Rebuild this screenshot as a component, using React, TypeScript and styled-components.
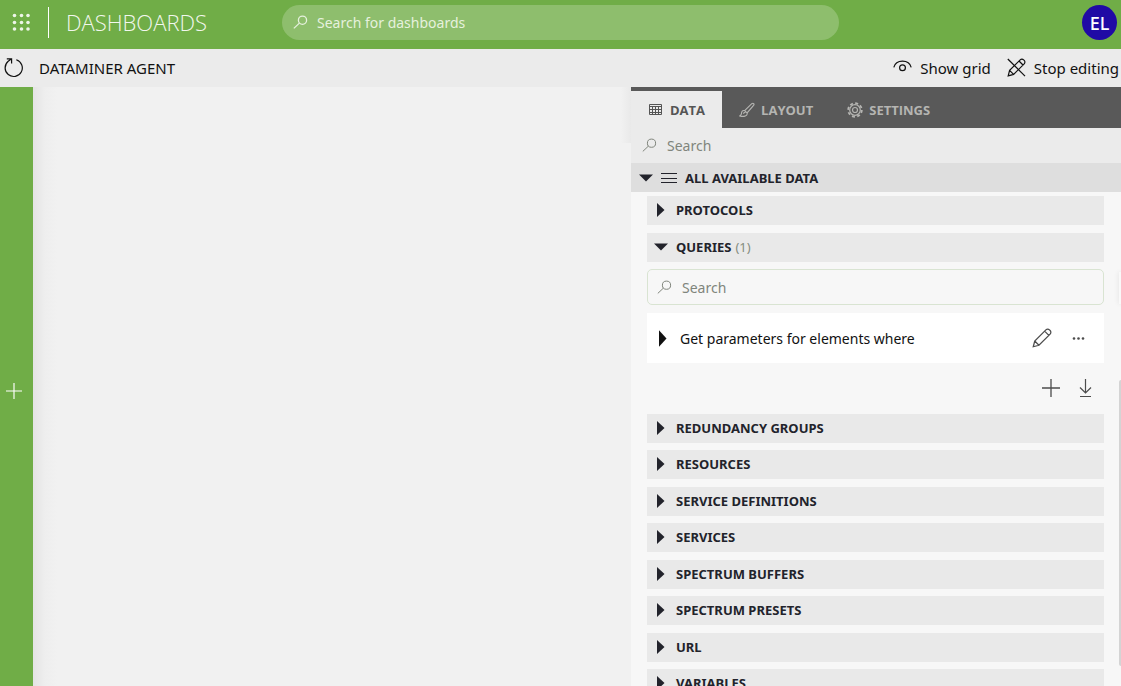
import React from "react";
import styled, { createGlobalStyle, css } from "styled-components";

const GlobalStyle = createGlobalStyle`
  *, *::before, *::after { box-sizing: border-box; }
  html, body { margin: 0; height: 100%; }
  #root { height: 100%; }
  body {
    overflow: hidden;
    font-family: "Noto Sans", "Open Sans", sans-serif;
    font-size: 14px;
    color: #111;
  }
  button, input { font: inherit; color: inherit; }
  button { border: 0; background: none; padding: 0; cursor: pointer; }
  svg { display: block; flex: none; }
`;

const Page = styled.div`
  display: flex;
  flex-direction: column;
  height: 100%;
  background: #f1f1f1;
`;

const Header = styled.header`
  flex: none;
  display: grid;
  grid-template-columns: 1fr minmax(0, 557px) 1fr;
  align-items: center;
  height: 49px;
  padding: 0 4px 4px;
  background: #70ad47;
`;

const Brand = styled.div`
  display: flex;
  align-items: center;
  padding-left: 8px;
`;

const AppTitle = styled.h1`
  margin: 0 0 0 16px;
  padding-left: 17px;
  border-left: 1px solid #fff;
  font-family: "Open Sans", "Noto Sans", sans-serif;
  font-size: 22px;
  font-weight: 300;
  line-height: 31px;
  color: #f2f7ee;
`;

const HeaderSearch = styled.label`
  display: flex;
  align-items: center;
  gap: 9px;
  height: 35px;
  padding: 0 12px 0 11px;
  border-radius: 18px;
  background: #8ebe6d;
  color: #e6f1de;
`;

const TextInput = styled.input`
  flex: 1;
  min-width: 0;
  border: 0;
  padding: 0;
  outline: 0;
  background: transparent;
  &::placeholder { color: currentColor; opacity: 1; }
`;

const Avatar = styled.button`
  justify-self: end;
  width: 35px;
  height: 35px;
  border-radius: 50%;
  background: #200aa5;
  color: #fff;
  font-size: 18px;
  font-weight: 500;
`;

const Toolbar = styled.div`
  flex: none;
  display: flex;
  align-items: center;
  height: 38px;
  padding: 0 2px 0 4px;
  background: #ebebeb;
  font-size: 15px;
`;

const PageName = styled.h2`
  flex: 1;
  margin: 0 0 0 16px;
  font-size: inherit;
  font-weight: 400;
`;

const ToolButton = styled.button`
  display: flex;
  align-items: center;
  gap: 8px;
  margin-left: 16px;
`;

const Body = styled.div`
  flex: 1;
  min-height: 0;
  display: flex;
`;

const Rail = styled.nav`
  flex: none;
  width: 33px;
  display: flex;
  align-items: center;
  padding: 8px 0 0 6px;
  background: #70ad47;
  color: #fff;
`;

const Canvas = styled.main`
  flex: 1;
  background:
    linear-gradient(to left, #e9e9e9, #f1f1f100 10px) right top / 10px 56px no-repeat,
    linear-gradient(to right, #e4e4e4, #eeeeee 12px, #f1f1f1 24px);
`;

const Panel = styled.aside`
  position: relative;
  flex: none;
  width: 490px;
  overflow: hidden;
  background: #f7f7f7;
`;

const Tabs = styled.div`
  display: flex;
  height: 41px;
  padding-top: 4px;
  background: #595959;
`;

const Tab = styled.button<{ $active?: boolean }>`
  display: flex;
  align-items: center;
  gap: 6px;
  padding: 0 17px;
  font-family: "Open Sans", "Noto Sans", sans-serif;
  font-size: 13px;
  font-weight: 700;
  color: #b5b5b2;
  ${(p) => p.$active && css`
    background: #ebebeb;
    color: #555;
  `}
`;

const PanelSearch = styled.label`
  display: flex;
  align-items: center;
  gap: 10px;
  height: 35px;
  padding: 0 11px;
  background: #ebebeb;
  color: #80857c;
`;

const caption = css`
  display: flex;
  align-items: center;
  width: 100%;
  height: 29px;
  font-size: 13px;
  font-weight: 700;
  color: #22232b;
`;

const GroupHeader = styled.button`
  ${caption}
  gap: 8px;
  padding: 0 8px;
  background: #dedede;
`;

const Tree = styled.ul`
  list-style: none;
  margin: 0;
  padding: 4px 17px 0 16px;
`;

const TreeItem = styled.li`
  margin-bottom: 8px;
  &:nth-child(odd) { margin-bottom: 7px; }
  &:first-child { margin-bottom: 8px; }
`;

const RowButton = styled.button`
  ${caption}
  gap: 8px;
  padding: 0 7px 2px;
  background: #e9e9e9;
`;

const Count = styled.span`
  margin-left: -4px;
  font-weight: 400;
  color: #858d80;
`;

const QuerySearch = styled(PanelSearch)`
  height: 36px;
  margin: 7px 0 8px;
  padding: 0 9px;
  border: 1px solid #d9e4d2;
  border-radius: 5px;
  background: transparent;
`;

const QueryCard = styled.div`
  display: flex;
  align-items: center;
  height: 50px;
  padding: 0 16px 0 9px;
  background: #fff;
`;

const QueryName = styled.button`
  flex: 1;
  display: flex;
  align-items: center;
  gap: 10px;
`;

const IconButton = styled.button`
  margin-left: 16px;
  color: #4c4c4c;
`;

const Actions = styled.div`
  display: flex;
  justify-content: flex-end;
  align-items: center;
  height: 43px;
  padding: 7px 10px 0 0;
`;

const ScrollThumb = styled.div`
  position: absolute;
  top: 293px;
  right: 0;
  width: 2px;
  height: 286px;
  border-radius: 2px 0 0 2px;
  background: #d4d4d4;
`;

const PanelHandle = styled.div`
  position: absolute;
  top: 185px;
  right: 0;
  width: 2px;
  height: 32px;
  background: #f9f9f9;
  box-shadow: 0 0 5px #0002;
`;

const line = { fill: "none", stroke: "currentColor" } as const;

const AppsIcon = () => (
  <svg width="20" height="20" viewBox="0 0 20 20" fill="#edf5e8">
    {[2.5, 9.5, 16].map((y) => [2.5, 9.5, 16].map((x) => (
      <circle key={`${x}-${y}`} cx={x} cy={y} r="1.8" />
    )))}
  </svg>
);

const SearchIcon = ({ weight = 1 }: { weight?: number }) => (
  <svg width="15" height="15" viewBox="0 0 15 15" {...line} strokeWidth={weight}>
    <circle cx="9.5" cy="5.2" r="4.1" />
    <path d="M6.4 8.1 0.8 13.4" />
  </svg>
);

const RefreshIcon = () => (
  <svg width="19" height="20" viewBox="0 0 19 20" {...line} strokeWidth="1.2">
    <path d="M12.3 1.700a8.600 8.600 0 1 1-8.100 1.600L7.300 1M2.800.9h4.800v4.500" />
  </svg>
);

const EyeIcon = () => (
  <svg width="19" height="20" viewBox="0 0 19 20" {...line} strokeWidth="1.2">
    <path d="M.8 9.4C1.8 5.6 5.3 3.2 9.5 3.2s7.7 2.4 8.7 6.2" />
    <circle cx="9.5" cy="9.7" r="2.9" />
  </svg>
);

const pencil = "M1.2 17.8 2.6 12.4 13.2 1.8a2.4 2.4 0 0 1 3.4 0l.6.6a2.4 2.4 0 0 1 0 3.4L6.6 16.4ZM2.6 12.4l4 4M12 3l4 4";

const StopEditIcon = () => (
  <svg width="19" height="20" viewBox="0 0 19 20" {...line} strokeWidth="1.2">
    <path d={pencil} />
    <path d="M.8 1 18 18.2" />
  </svg>
);

const PencilIcon = () => (
  <svg width="20" height="20" viewBox="0 0 19 19" {...line} strokeWidth="1.2">
    <path d={pencil} />
  </svg>
);

const TableIcon = () => (
  <svg width="16" height="14" viewBox="-1 0 16 14" {...line}>
    <path d="M.5 1.5h12v10H.5ZM.5 3.5h12M.5 6.500h12M.5 9.500h12M3.500 3.500v8M6.500 3.500v8M9.500 3.500v8" />
  </svg>
);

const BrushIcon = () => (
  <svg width="16" height="16" viewBox="0 0 17 16" {...line} strokeWidth="1.2">
    <path d="M6 8.6 13.6 1.3c1.5-1.2 3.1.2 1.9 1.8L8.6 11ZM6 8.6C3.200 8 2.800 10.200 2.600 11.800 2.400 13.300 1.400 13.800.8 14.300 4 15.300 9.600 15 8.600 11M4.400 11.800l2.400-1.600" />
  </svg>
);

const GearIcon = () => (
  <svg width="16" height="16" viewBox="0 0 16 16" {...line} strokeWidth="1.2">
    <circle cx="8" cy="8" r="2.5" />
    <circle cx="8" cy="8" r="5.3" />
    <circle cx="8" cy="8" r="6.8" strokeWidth="1.8" strokeDasharray="3 2.34" />
  </svg>
);

const DownArrow = () => (
  <svg width="14" height="8" viewBox="0 0 14 8" fill="currentColor"><path d="M0 .5h14L7 7.5Z" /></svg>
);

const RightArrow = ({ height = 16 }: { height?: number }) => (
  <svg width="14" height={height} viewBox="0 0 14 16" preserveAspectRatio="none" fill="currentColor">
    <path d="M3 1v14L10.500 8Z" />
  </svg>
);

const MenuIcon = () => (
  <svg width="16" height="12" viewBox="0 0 16 12" {...line}><path d="M0 1.5h16M0 6.5h16M0 10.5h16" /></svg>
);

const PlusIcon = ({ size }: { size: number }) => (
  <svg width={size} height={size} viewBox="0 0 18 18" {...line} strokeWidth="1.3"><path d="M9 0v18M0 9h18" /></svg>
);

const MoreIcon = () => (
  <svg width="20" height="20" viewBox="0 0 20 20" fill="currentColor">
    <circle cx="6" cy="10.5" r="1.3" /><circle cx="10.500" cy="10.5" r="1.3" /><circle cx="15" cy="10.5" r="1.3" />
  </svg>
);

const DownloadIcon = () => (
  <svg width="18" height="20" viewBox="0 0 18 20" {...line} strokeWidth="1.2">
    <path d="M9.5 1v14M4 9.5l5.5 5.5L15 9.500M4 18.500h11" />
  </svg>
);

const Row = ({ label }: { label: string }) => (
  <TreeItem>
    <RowButton aria-expanded="false"><RightArrow />{label}</RowButton>
  </TreeItem>
);

const categories = [
  "REDUNDANCY GROUPS",
  "RESOURCES",
  "SERVICE DEFINITIONS",
  "SERVICES",
  "SPECTRUM BUFFERS",
  "SPECTRUM PRESETS",
  "URL",
  "VARIABLES",
];

export default function App() {
  return (
    <Page>
      <GlobalStyle />
      <Header>
        <Brand>
          <button aria-label="Apps"><AppsIcon /></button>
          <AppTitle>DASHBOARDS</AppTitle>
        </Brand>
        <HeaderSearch>
          <SearchIcon weight={1.3} />
          <TextInput type="text" aria-label="Search for dashboards" placeholder="Search for dashboards" />
        </HeaderSearch>
        <Avatar>EL</Avatar>
      </Header>
      <Toolbar>
        <button aria-label="Refresh"><RefreshIcon /></button>
        <PageName>DATAMINER AGENT</PageName>
        <ToolButton><EyeIcon />Show grid</ToolButton>
        <ToolButton><StopEditIcon />Stop editing</ToolButton>
      </Toolbar>
      <Body>
        <Rail><button aria-label="Add"><PlusIcon size={16} /></button></Rail>
        <Canvas />
        <Panel>
          <Tabs role="tablist">
            <Tab role="tab" aria-selected="true" $active><TableIcon />DATA</Tab>
            <Tab role="tab" aria-selected="false"><BrushIcon />LAYOUT</Tab>
            <Tab role="tab" aria-selected="false"><GearIcon />SETTINGS</Tab>
          </Tabs>
          <PanelSearch>
            <SearchIcon />
            <TextInput type="text" aria-label="Search data" placeholder="Search" />
          </PanelSearch>
          <GroupHeader aria-expanded="true"><DownArrow /><MenuIcon />ALL AVAILABLE DATA</GroupHeader>
          <Tree>
            <Row label="PROTOCOLS" />
            <TreeItem>
              <RowButton aria-expanded="true"><DownArrow />QUERIES <Count>(1)</Count></RowButton>
              <QuerySearch>
                <SearchIcon />
                <TextInput type="text" aria-label="Search queries" placeholder="Search" />
              </QuerySearch>
              <QueryCard>
                <QueryName aria-expanded="false"><RightArrow height={19} />Get parameters for elements where</QueryName>
                <IconButton aria-label="Edit"><PencilIcon /></IconButton>
                <IconButton aria-label="More"><MoreIcon /></IconButton>
              </QueryCard>
              <Actions>
                <IconButton aria-label="Add query"><PlusIcon size={18} /></IconButton>
                <IconButton aria-label="Import query"><DownloadIcon /></IconButton>
              </Actions>
            </TreeItem>
            {categories.map((label) => <Row key={label} label={label} />)}
          </Tree>
          <PanelHandle />
          <ScrollThumb />
        </Panel>
      </Body>
    </Page>
  );
}
